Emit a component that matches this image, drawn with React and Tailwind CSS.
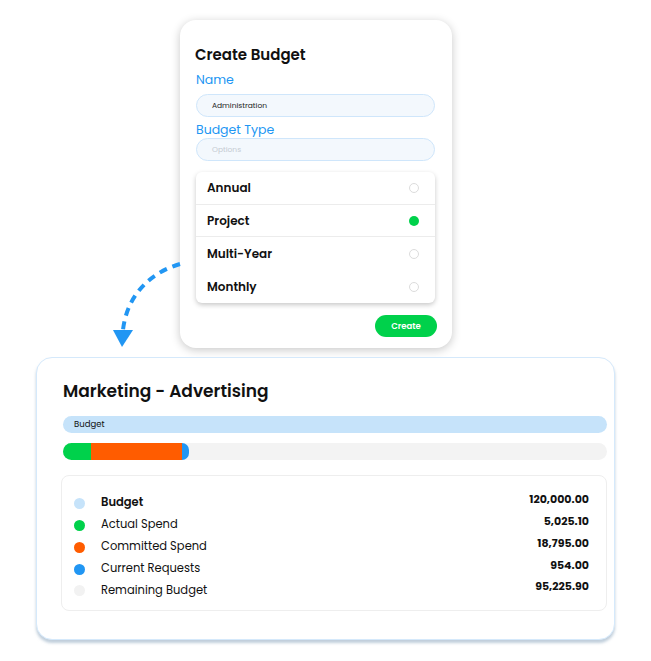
import React from "react";

const types = [
  { name: "Annual", h: "h-[33px]", line: true },
  { name: "Project", h: "h-[32px]", line: true, on: true },
  { name: "Multi-Year", h: "h-[33px]" },
  { name: "Monthly", h: "h-[33px]" },
];

const legend = [
  { label: "Budget", value: "120,000.00", dot: "bg-[#c6e3fa]", bold: true },
  { label: "Actual Spend", value: "5,025.10", dot: "bg-[#00d14b]" },
  { label: "Committed Spend", value: "18,795.00", dot: "bg-[#ff5c00]" },
  { label: "Current Requests", value: "954.00", dot: "bg-[#2196f3]" },
  { label: "Remaining Budget", value: "95,225.90", dot: "bg-[#f2f2f2]" },
];

const CreateBudget = () => (
  <div className="ml-[180px] mt-[20px] w-[272px] h-[328px] rounded-[16px] bg-white shadow-[0_2px_10px_rgba(0,0,0,0.22)] pt-[25px] pl-[16px] pr-[17px] flex flex-col">
    <h2 className="text-[15px] leading-[20px] font-semibold text-[#111] -ml-px">Create Budget</h2>
    <label className="mt-[7px] text-[12.5px] leading-[16px] text-[#2196f3]">Name</label>
    <div className="mt-[6px] h-[23px] rounded-full bg-[#f3f8fd] border border-[#cfe6fb] flex items-center pl-[15px] text-[7.5px] text-[#222]">
      Administration
    </div>
    <label className="mt-[5px] text-[12.5px] leading-[16px] text-[#2196f3]">Budget Type</label>
    <div className="mt-0 h-[23px] rounded-full bg-[#f3f8fd] border border-[#cfe6fb] flex items-center pl-[15px] text-[7.5px] text-[#c5cbd2]">
      Options
    </div>
    <div className="mt-[11px] rounded-[6px] bg-white shadow-[0_2px_5px_rgba(0,0,0,0.22)] flex flex-col">
      {types.map((t) => (
        <div
          key={t.name}
          className={`${t.h} flex items-center justify-between pl-[11px] pr-[16px] ${t.line ? "border-b border-[#ececec]" : ""}`}
        >
          <span className="text-[12px] font-semibold text-[#111]">{t.name}</span>
          {t.on ? (
            <span className="w-[10px] h-[10px] rounded-full bg-[#00d14b]" />
          ) : (
            <span className="w-[10px] h-[10px] rounded-full border border-[#dcdcdc]" />
          )}
        </div>
      ))}
    </div>
    <div className="mt-[12px] flex justify-end -mr-[2px]">
      <button className="w-[62px] h-[22px] rounded-full bg-[#00d14b] text-white text-[8.5px] font-semibold">
        Create
      </button>
    </div>
  </div>
);

const Marketing = () => (
  <div className="ml-[36px] mt-[9px] w-[579px] h-[283px] rounded-[16px] bg-white border border-[#d5e9fb] shadow-[0_3px_3px_rgba(140,165,190,0.55)] pt-[21px] pl-[26px] pr-[7px] flex flex-col">
    <h1 className="text-[17px] leading-[24px] font-semibold text-[#111]">Marketing - Advertising</h1>
    <div className="mt-[13px] h-[17px] rounded-full bg-[#c6e3fa] flex items-center pl-[11px] text-[8.5px] text-[#111]">
      Budget
    </div>
    <div className="mt-[10px] h-[17px] rounded-full bg-[#f3f3f3] flex overflow-hidden">
      <div className="w-[28px] bg-[#00d14b]" />
      <div className="w-[91px] bg-[#ff5c00]" />
      <div className="w-[7px] bg-[#2196f3] rounded-r-full" />
    </div>
    <div className="mt-[15px] -ml-[2px] h-[136px] rounded-[8px] border border-[#eeeeee] pt-[16px] pl-[12px] pr-[17px] flex flex-col">
      {legend.map((l, i) => (
        <div key={l.label} className={`flex items-center ${i === 4 ? "h-[21px]" : "h-[22px]"}`}>
          <span className={`w-[11px] h-[11px] rounded-full ${l.dot}`} />
          <span className={`ml-[16px] text-[11.5px] text-[#111] ${l.bold ? "font-semibold" : ""}`}>{l.label}</span>
          <span className="ml-auto -mt-[8px] text-[11px] font-bold text-[#111]">{l.value}</span>
        </div>
      ))}
    </div>
  </div>
);

const App = () => {
  return (
    <div className="relative w-[651px] h-[661px] bg-white font-['Poppins','Inter',sans-serif] flex flex-col">
      <CreateBudget />
      <Marketing />
      <svg className="absolute left-0 top-0 pointer-events-none" width="651" height="661">
        <path
          d="M180 264 C152 272 127 294 123 330"
          fill="none"
          stroke="#2196f3"
          strokeWidth="4"
          strokeDasharray="8 6"
        />
        <polygon points="113,330 133,330 122,347" fill="#2196f3" />
      </svg>
    </div>
  );
};

export default App;
